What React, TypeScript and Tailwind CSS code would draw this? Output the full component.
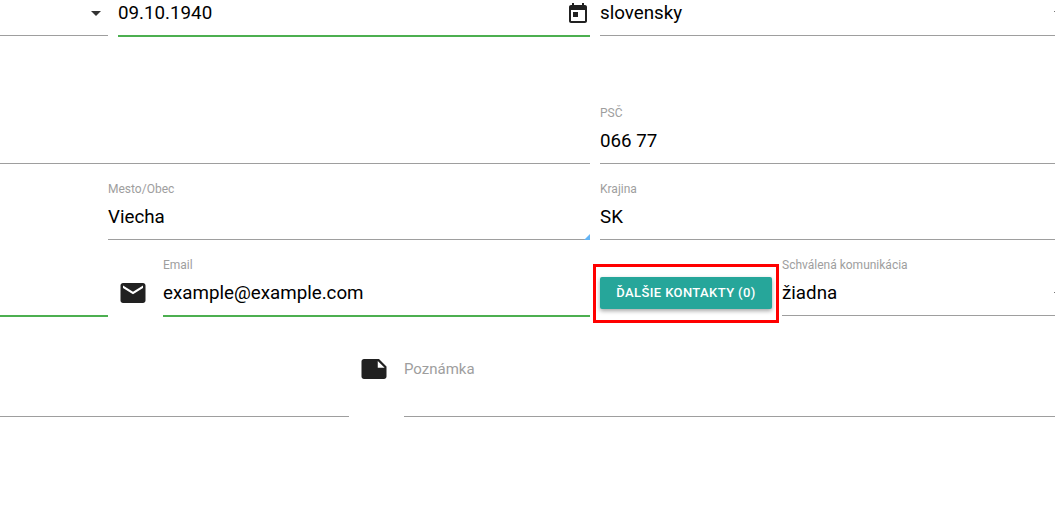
const ROBOTO = "font-['Roboto',sans-serif]";

// material icons, same paths as the app uses
const TodayIcon = () => (
  <svg viewBox="0 0 24 24" className="w-6 h-6 mt-[2px] fill-[#212121] shrink-0">
    <path d="M19 3h-1V1h-2v2H8V1H6v2H5c-1.11 0-1.99.9-1.99 2L3 19c0 1.1.89 2 2 2h14c1.1 0 2-.9 2-2V5c0-1.1-.9-2-2-2zm0 16H5V8h14v11zM7 10h5v5H7z" />
  </svg>
);

const MailIcon = () => (
  <svg viewBox="0 0 24 24" className="w-[30px] h-[30px] fill-[#212121]">
    <path d="M20 4H4c-1.1 0-1.99.9-1.99 2L2 18c0 1.1.9 2 2 2h16c1.1 0 2-.9 2-2V6c0-1.1-.9-2-2-2zm0 4l-8 5-8-5V6l8 5 8-5v2z" />
  </svg>
);

const NoteIcon = () => (
  <svg viewBox="0 0 24 24" className="w-[30px] h-[30px] fill-[#212121]">
    <path d="M22 10l-6-6H4c-1.1 0-2 .9-2 2v12.01c0 1.1.9 1.99 2 1.99l16-.01c1.1 0 2-.89 2-1.99v-8zm-7-4.5l5.5 5.5H15V5.5z" />
  </svg>
);

// the select arrow is cut off by the window, only a speck of it is left
const ArrowSpeck = ({ className }: { className: string }) => (
  <span className={`absolute right-0 w-px h-px bg-[#777] ${className}`} />
);

function Field({ label, value, green, className }: { label?: string; value?: string; green?: boolean; className?: string }) {
  return (
    <div className={`h-[64px] flex flex-col justify-end ${className ?? ""}`}>
      {label && <div className="text-[12px] leading-[14px] text-[#9e9e9e] mb-[10px]">{label}</div>}
      {value && <div className="text-[18.75px] leading-[22px] text-black mb-[11px]">{value}</div>}
      <div className={green ? "h-[2px] bg-[#4caf50]" : "h-px mb-px bg-[#9e9e9e]"} />
    </div>
  );
}

export default function App() {
  return (
    <div className={`relative h-[513px] w-[1055px] overflow-hidden bg-white ${ROBOTO}`}>
      {/* row 1, cut off by the top of the viewport */}
      <div className="flex h-[37px]">
        <div className="w-[108px] h-full flex flex-col justify-between">
          <div className="flex justify-end pr-[7px] pt-[11px]">
            <span className="border-x-[5px] border-x-transparent border-t-[5px] border-t-[#333]" />
          </div>
          <div className="h-px mb-px bg-[#9e9e9e]" />
        </div>
        <div className="w-[472px] ml-[10px] h-full flex flex-col justify-between">
          <div className="flex items-start justify-between">
            <span className="text-[18.75px] leading-[22px] text-black pt-[2px]">09.10.1940</span>
            <TodayIcon />
          </div>
          <div className="h-[2px] bg-[#4caf50]" />
        </div>
        <div className="relative flex-1 ml-[10px] h-full flex flex-col justify-between">
          <div className="text-[18.75px] leading-[22px] text-black pt-[2px]">slovensky</div>
          <ArrowSpeck className="top-[11px]" />
          <div className="h-px mb-px bg-[#9e9e9e]" />
        </div>
      </div>

      {/* PSC */}
      <div className="flex mt-[64px]">
        <div className="w-[590px] flex flex-col justify-end">
          <div className="h-px mb-px bg-[#9e9e9e]" />
        </div>
        <Field label="PSČ" value="066 77" className="flex-1 ml-[10px]" />
      </div>

      {/* mesto, krajina */}
      <div className="flex mt-[12px]">
        <div className="w-[108px]" />
        <div className="relative w-[482px]">
          <Field label="Mesto/Obec" value="Viecha" />
          <span className="absolute right-0 bottom-[1px] border-l-[6px] border-l-transparent border-b-[6px] border-b-[#64b5f6]" />
        </div>
        <Field label="Krajina" value="SK" className="flex-1 ml-[10px]" />
      </div>

      {/* email, kontakty, komunikacia */}
      <div className="flex mt-[12px]">
        <div className="w-[108px] flex flex-col justify-end">
          <div className="h-[2px] bg-[#4caf50]" />
        </div>
        <div className="w-[55px] pt-[25px] pl-[10px]">
          <MailIcon />
        </div>
        <Field label="Email" value="example@example.com" green className="w-[427px]" />
        <div className="w-[192px] pl-[10px] pt-[24px]">
          <div className="relative w-[172px]">
            <button className="block w-[172px] h-[32px] rounded-[2px] bg-[#26a69a] text-white text-[13px] font-medium tracking-[0.4px] shadow-[0_2px_4px_rgba(0,0,0,0.35)]">
              ĎALŠIE KONTAKTY (0)
            </button>
            <div className="absolute -left-[7px] -right-[7px] -top-[13px] -bottom-[14px] border-[3px] border-[#ff0000]" />
          </div>
        </div>
        <div className="relative flex-1">
          <Field label="Schválená komunikácia" value="žiadna" />
          <ArrowSpeck className="top-[39px]" />
        </div>
      </div>

      {/* poznamka */}
      <div className="flex mt-[37px] h-[64px]">
        <div className="w-[349px] flex flex-col justify-end">
          <div className="h-px mb-px bg-[#9e9e9e]" />
        </div>
        <div className="w-[55px] pl-[10px]">
          <NoteIcon />
        </div>
        <div className="flex-1 flex flex-col justify-between">
          <div className="text-[15px] leading-[30px] text-[#9e9e9e]">Poznámka</div>
          <div className="h-px mb-px bg-[#9e9e9e]" />
        </div>
      </div>
    </div>
  );
}
